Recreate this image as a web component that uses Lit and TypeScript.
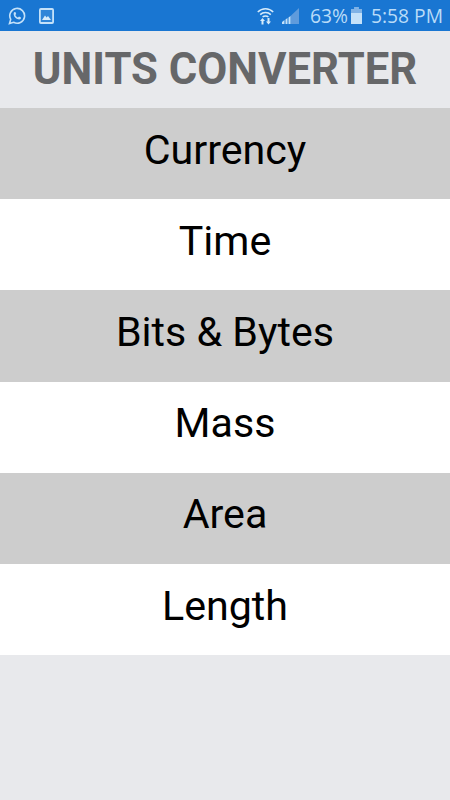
import { LitElement, html, css } from "lit";
import { customElement } from "lit/decorators.js";

const ITEMS = ["Currency", "Time", "Bits & Bytes", "Mass", "Area", "Length"];

@customElement("app-root")
export class AppRoot extends LitElement {
  static styles = css`
    :host { display: flex; flex-direction: column; width: 450px; height: 800px; background: #e8e9ec; font-family: Roboto, "Liberation Sans", sans-serif; overflow: hidden; }
    .status { flex: none; height: 31px; background: #1976d2; display: flex; align-items: center; justify-content: space-between; padding: 0 7px 0 8px; box-sizing: border-box; color: #b9dcf8; font-size: 19.3px; }
    .left, .right { display: flex; align-items: center; }
    .left { gap: 13px; }
    .right { font-family: "Open Sans", Roboto, sans-serif; }
    svg { display: block; }
    .wifi { margin-right: 8px; }
    .signal { margin-right: 11px; }
    .batt { margin: 0 9px 0 3px; }
    .title { flex: none; height: 77px; display: flex; align-items: center; justify-content: center; margin: 0; font-size: 43.6px; font-weight: 700; color: #666769; }
    .row { flex: none; height: 91.2px; box-sizing: border-box; padding-bottom: 8px; display: flex; align-items: center; justify-content: center; font-size: 41.2px; color: #000; background: #fff; }
    .row:nth-child(odd) { background: #cdcdcd; }
  `;
  render() {
    return html`
      <div class="status">
        <div class="left">
          <svg width="18" height="18" viewBox="0 0 18 18" fill="none" stroke="#c4e1f9" stroke-width="1.6">
            <path d="M1.5 16.5 L2.7 12.4 A7.4 7.4 0 1 1 5.6 15.3 Z" />
            <path d="M6 5.2 L7.4 5 L8.2 6.9 L7.3 7.9 C7.8 9 8.8 10 10 10.5 L11 9.6 L13 10.5 L12.8 11.8 C11.8 13 9.2 12.6 7.4 10.8 C5.6 9 5.2 6.4 6 5.2 Z" fill="#c4e1f9" stroke="none" />
          </svg>
          <svg width="15" height="16" viewBox="0 0 15 16">
            <rect x="0.9" y="1" width="13.2" height="14" rx="1" fill="#2f85d8" stroke="#c4e1f9" stroke-width="1.8" />
            <path d="M3 12 L6 7.5 L7.6 9.5 L9 8 L12 12 Z" fill="#d6ebfb" />
          </svg>
        </div>
        <div class="right">
          <svg class="wifi" width="17" height="18" viewBox="0 0 17 18" fill="none" stroke="#d6ebfb" stroke-width="1.5">
            <path d="M0.8 5 C5 0.6 12 0.6 16.2 5" />
            <path d="M3.2 7.6 C6 4.8 11 4.8 13.8 7.6" />
            <path d="M5.6 10 C7 8.8 10 8.8 11.4 10" />
            <path d="M4.5 17.5 V14 H3 L5.5 11 L8 14 H6.5 V17.5 Z M10.5 11 V14.5 H9 L11.5 17.5 L14 14.5 H12.5 V11 Z" fill="#d6ebfb" stroke="none" />
          </svg>
          <svg class="signal" width="17" height="16" viewBox="0 0 17 16">
            <path d="M17 0 V16 H8.5 V8 Z" fill="#5f9bdc" />
            <path d="M0 16 V14 L2.5 12 V16 Z M3.5 16 V11.5 L5.5 10 V16 Z M6.5 16 V9.5 L8.5 8 V16 Z" fill="#c4e1f9" />
          </svg>
          <span>63%</span>
          <svg class="batt" width="11" height="17" viewBox="0 0 11 17">
            <path d="M3.5 0 H7.5 V2 H11 V17 H0 V2 H3.5 Z" fill="#c4e1f9" />
            <path d="M3.5 0 H7.5 V2 H11 V6 H0 V2 H3.5 Z" fill="#7fb2e6" />
          </svg>
          <span>5:58 PM</span>
        </div>
      </div>
      <h1 class="title">UNITS CONVERTER</h1>
      <div class="list">
        ${ITEMS.map((t) => html`<div class="row">${t}</div>`)}
      </div>
    `;
  }
}
